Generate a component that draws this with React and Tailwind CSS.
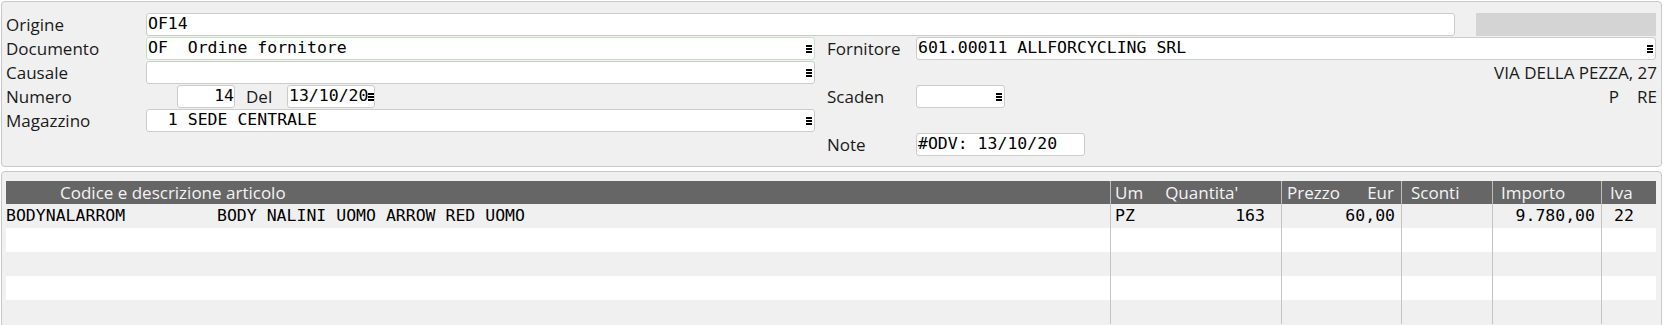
import React from "react";

const sans = "font-['Open_Sans',sans-serif] text-[17px] text-[#1a1a1a]";
const mono = "font-['DejaVu_Sans_Mono',monospace] text-[16.5px] text-black";

function MenuIcon() {
  return (
    <svg width="6" height="8" viewBox="0 0 6 8" className="shrink-0">
      <rect x="0" y="0" width="6" height="2" fill="#000" />
      <rect x="0" y="3" width="6" height="2" fill="#000" />
      <rect x="0" y="6" width="6" height="2" fill="#000" />
    </svg>
  );
}

function Field({ className = "", children, menu, green, right }) {
  return (
    <div
      className={`h-[23px] bg-white rounded-[3px] border flex items-center pl-px pr-[2px] ${
        green ? "border-[#c6e3c2]" : "border-[#cccccc]"
      } ${className}`}
    >
      <span className={`${mono} whitespace-pre leading-none ${right ? "flex-1 text-right" : menu === "inline" ? "" : "flex-1"}`}>
        {children}
      </span>
      {menu && <MenuIcon />}
    </div>
  );
}

function Label({ children, className = "w-[140px]" }) {
  return <div className={`${sans} leading-none shrink-0 ${className}`}>{children}</div>;
}

const columns = [
  { key: "um", w: "w-[171px]" },
  { key: "prezzo", w: "w-[120px]" },
  { key: "sconti", w: "w-[91px]" },
  { key: "importo", w: "w-[109px]" },
  { key: "iva", w: "w-[54px]" },
];

function DataRow({ white, children }) {
  return (
    <div className={`flex h-6 ${white ? "bg-white" : "bg-[#f0f0f0]"}`}>
      {children || (
        <>
          <div className="w-[1104px]" />
          {columns.map((c) => (
            <div key={c.key} className={`${c.w} border-l border-[#c4c4c4]`} />
          ))}
        </>
      )}
    </div>
  );
}

export default function App() {
  return (
    <div className="w-[1663px] h-[325px] overflow-hidden bg-white pt-px">
      {/* Testata documento */}
      <div className="mx-px border border-[#c8c8c8] rounded-[4px] bg-[#f0f0f0] pl-1 pr-[4px] pt-[11px] pb-[10px] flex flex-col gap-px">
        <div className="flex items-center h-[23px]">
          <Label>Origine</Label>
          <Field className="w-[1309px]">OF14</Field>
          <div className="ml-[21px] w-[180px] h-[23px] bg-[#d4d4d4]" />
        </div>

        <div className="flex items-center h-[23px]">
          <Label>Documento</Label>
          <Field className="w-[669px]" menu green>OF  Ordine fornitore</Field>
          <Label className="ml-3 w-[89px]">Fornitore</Label>
          <Field className="w-[740px]" menu>601.00011 ALLFORCYCLING SRL</Field>
        </div>

        <div className="flex items-center h-[23px]">
          <Label>Causale</Label>
          <Field className="w-[669px]" menu />
          <div className={`${sans} flex-1 text-right leading-none`}>VIA DELLA PEZZA, 27</div>
        </div>

        <div className="flex items-center h-[23px]">
          <Label className="w-[171px]">Numero</Label>
          <Field className="w-[58px] !pr-0" right>14</Field>
          <Label className="ml-[11px] w-[41px]">Del</Label>
          <Field className="w-[88px]" menu="inline">13/10/20</Field>
          <div className="w-[452px]" />
          <Label className="w-[89px]">Scaden</Label>
          <Field className="w-[89px]" menu />
          <div className="flex-1" />
          <div className={`${sans} leading-none`}>P</div>
          <div className={`${sans} leading-none ml-[18px]`}>RE</div>
        </div>

        <div className="flex items-center h-[23px]">
          <Label>Magazzino</Label>
          <Field className="w-[669px]" menu>  1 SEDE CENTRALE</Field>
        </div>

        <div className="flex items-center h-[23px]">
          <div className="w-[821px]" />
          <Label className="w-[89px]">Note</Label>
          <Field className="w-[169px]">#ODV: 13/10/20</Field>
        </div>
      </div>

      {/* Righe articoli */}
      <div className="mx-px mt-1 border border-[#c8c8c8] rounded-[4px] bg-[#f0f0f0] pl-1 pr-[5px] pt-[9px] h-[200px]">
        <div className={`flex h-[23px] bg-[#666666] ${sans} !text-[#f4f4f4] leading-none items-stretch`}>
          <div className="w-[1104px] flex items-center pl-[54px]">Codice e descrizione articolo</div>
          <div className="w-[171px] border-l border-[#bdbdbd] flex items-center pl-[4px]">
            <span>Um</span>
            <span className="ml-[22px]">Quantita'</span>
          </div>
          <div className="w-[120px] border-l border-[#bdbdbd] flex items-center pl-[5px] pr-[7px] justify-between">
            <span>Prezzo</span>
            <span>Eur</span>
          </div>
          <div className="w-[91px] border-l border-[#bdbdbd] flex items-center pl-[9px]">Sconti</div>
          <div className="w-[109px] border-l border-[#bdbdbd] flex items-center pl-[8px]">Importo</div>
          <div className="w-[54px] border-l border-[#bdbdbd] flex items-center pl-[8px]">Iva</div>
        </div>

        <DataRow>
          <div className={`w-[1104px] flex items-center ${mono} whitespace-pre leading-none`}>
            <span className="w-[211px]">BODYNALARROM</span>
            <span>BODY NALINI UOMO ARROW RED UOMO</span>
          </div>
          <div className={`w-[171px] border-l border-[#c4c4c4] flex items-center pl-[4px] pr-[16px] justify-between ${mono} leading-none`}>
            <span>PZ</span>
            <span>163</span>
          </div>
          <div className={`w-[120px] border-l border-[#c4c4c4] flex items-center justify-end pr-[6px] ${mono} leading-none`}>60,00</div>
          <div className="w-[91px] border-l border-[#c4c4c4]" />
          <div className={`w-[109px] border-l border-[#c4c4c4] flex items-center justify-end pr-[6px] ${mono} leading-none`}>9.780,00</div>
          <div className={`w-[54px] border-l border-[#c4c4c4] flex items-center pl-[12px] ${mono} leading-none`}>22</div>
        </DataRow>
        <DataRow white />
        <DataRow />
        <DataRow white />
        <DataRow />
      </div>
    </div>
  );
}
